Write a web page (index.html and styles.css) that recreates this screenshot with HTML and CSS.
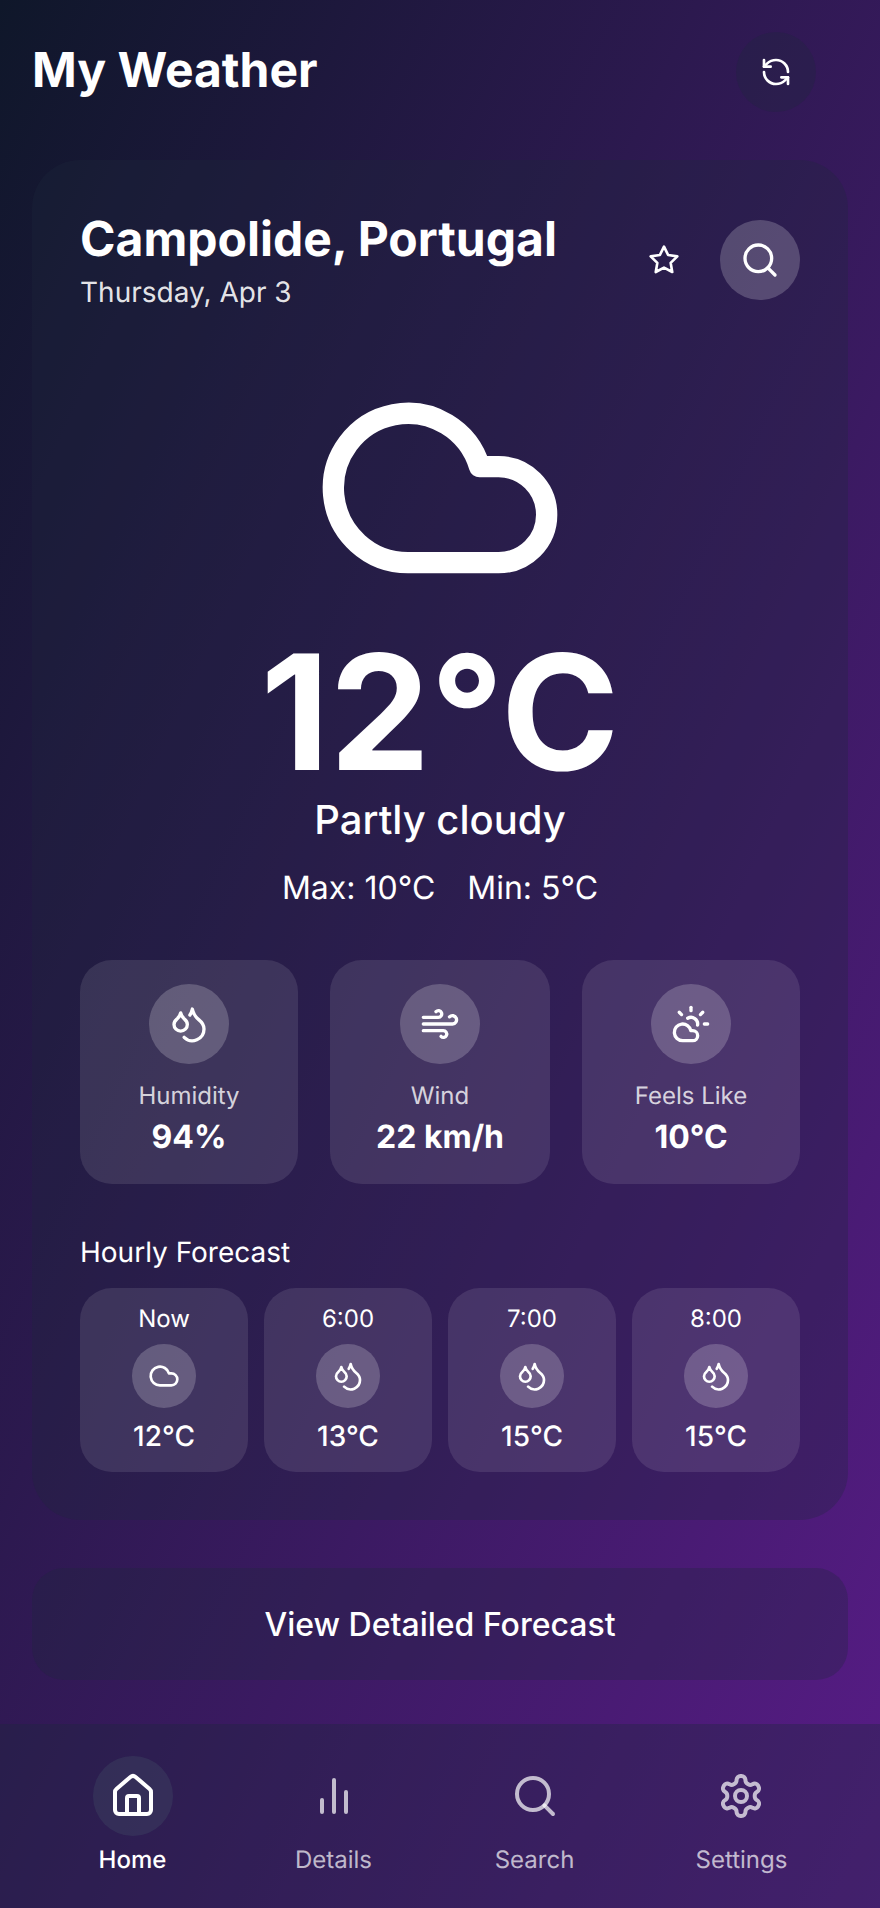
FILE: index.html
```html
<!DOCTYPE html>
<html lang="en">
<head>
    <meta charset="UTF-8">
    <meta name="viewport" content="width=device-width, initial-scale=1.0">
    <title>My Weather</title>
    <link rel="stylesheet" href="styles.css">
</head>
<body>
<svg class="defs" aria-hidden="true">
    <symbol id="i-cloud" viewBox="0 0 24 24"><path d="M17.5 19H9a7 7 0 1 1 6.71-9h1.79a4.5 4.5 0 1 1 0 9Z"/></symbol>
    <symbol id="i-drops" viewBox="0 0 24 24"><path d="M7 16.3c2.2 0 4-1.83 4-4.05 0-1.16-.57-2.26-1.71-3.19S7.29 6.75 7 5.3c-.29 1.45-1.14 2.84-2.29 3.76S3 11.1 3 12.25c0 2.22 1.8 4.05 4 4.05z"/><path d="M12.56 6.6A10.97 10.97 0 0 0 14 3.02c.5 2.5 2 4.9 4 6.5s3 3.5 3 5.5a6.98 6.98 0 0 1-11.91 4.97"/></symbol>
    <symbol id="i-wind" viewBox="0 0 24 24"><path d="M17.7 7.7a2.5 2.5 0 1 1 1.8 4.3H2"/><path d="M9.6 4.6A2 2 0 1 1 11 8H2"/><path d="M12.6 19.4A2 2 0 1 0 14 16H2"/></symbol>
    <symbol id="i-cloud-sun" viewBox="0 0 24 24"><path d="M12 2v2"/><path d="m4.93 4.93 1.41 1.41"/><path d="M20 12h2"/><path d="m19.07 4.93-1.41 1.41"/><path d="M15.947 12.65a4 4 0 0 0-5.925-4.128"/><path d="M13 22H7a5 5 0 1 1 4.9-6H13a3 3 0 0 1 0 6Z"/></symbol>
    <symbol id="i-search" viewBox="0 0 24 24"><circle cx="11" cy="11" r="8"/><path d="m21 21-4.3-4.3"/></symbol>
</svg>

<div class="app">
    <!-- Header -->
    <header class="top-bar">
        <h1>My Weather</h1>
        <button class="round-btn refresh-btn">
            <svg class="icon-32" viewBox="0 0 24 24"><path d="M21 12a9 9 0 0 0-9-9 9.75 9.75 0 0 0-6.74 2.74L3 8"/><path d="M3 3v5h5"/><path d="M3 12a9 9 0 0 0 9 9 9.75 9.75 0 0 0 6.74-2.74L21 16"/><path d="M16 16h5v5"/></svg>
        </button>
    </header>

    <!-- Main card -->
    <main class="weather-card">
        <div class="place-row">
            <div>
                <h2>Campolide, Portugal</h2>
                <p class="date">Thursday, Apr 3</p>
            </div>
            <div class="place-actions">
                <svg class="icon-32 star" viewBox="0 0 24 24"><polygon points="12 2 15.09 8.26 22 9.27 17 14.14 18.18 21.02 12 17.77 5.82 21.02 7 14.14 2 9.27 8.91 8.26 12 2"/></svg>
                <button class="round-btn search-btn"><svg class="icon-40"><use href="#i-search"/></svg></button>
            </div>
        </div>

        <div class="current">
            <svg class="big-cloud"><use href="#i-cloud"/></svg>
            <div class="temp">12°C</div>
            <div class="condition">Partly cloudy</div>
            <div class="range"><span>Max: 10°C</span><span>Min: 5°C</span></div>
        </div>

        <div class="stats">
            <div class="stat">
                <div class="stat-icon"><svg class="icon-40"><use href="#i-drops"/></svg></div>
                <div class="stat-label">Humidity</div>
                <div class="stat-value">94%</div>
            </div>
            <div class="stat">
                <div class="stat-icon"><svg class="icon-40"><use href="#i-wind"/></svg></div>
                <div class="stat-label">Wind</div>
                <div class="stat-value">22 km/h</div>
            </div>
            <div class="stat">
                <div class="stat-icon"><svg class="icon-40"><use href="#i-cloud-sun"/></svg></div>
                <div class="stat-label">Feels Like</div>
                <div class="stat-value">10°C</div>
            </div>
        </div>

        <h3>Hourly Forecast</h3>
        <div class="hours">
            <div class="hour">
                <div class="hour-time">Now</div>
                <div class="hour-icon"><svg class="icon-32"><use href="#i-cloud"/></svg></div>
                <div class="hour-temp">12°C</div>
            </div>
            <div class="hour">
                <div class="hour-time">6:00</div>
                <div class="hour-icon"><svg class="icon-32"><use href="#i-drops"/></svg></div>
                <div class="hour-temp">13°C</div>
            </div>
            <div class="hour">
                <div class="hour-time">7:00</div>
                <div class="hour-icon"><svg class="icon-32"><use href="#i-drops"/></svg></div>
                <div class="hour-temp">15°C</div>
            </div>
            <div class="hour">
                <div class="hour-time">8:00</div>
                <div class="hour-icon"><svg class="icon-32"><use href="#i-drops"/></svg></div>
                <div class="hour-temp">15°C</div>
            </div>
        </div>
    </main>

    <button class="detail-btn">View Detailed Forecast</button>

    <!-- Bottom navigation -->
    <nav class="bottom-nav">
        <div class="nav-item active">
            <div class="nav-icon">
                <svg class="icon-48" viewBox="0 0 24 24"><path d="M15 21v-8a1 1 0 0 0-1-1h-4a1 1 0 0 0-1 1v8"/><path d="M3 10a2 2 0 0 1 .709-1.528l7-5.999a2 2 0 0 1 2.582 0l7 5.999A2 2 0 0 1 21 10v9a2 2 0 0 1-2 2H5a2 2 0 0 1-2-2z"/></svg>
            </div>
            <span>Home</span>
        </div>
        <div class="nav-item">
            <div class="nav-icon">
                <svg class="icon-48" viewBox="0 0 24 24"><path d="M18 20V10"/><path d="M12 20V4"/><path d="M6 20v-6"/></svg>
            </div>
            <span>Details</span>
        </div>
        <div class="nav-item">
            <div class="nav-icon"><svg class="icon-48"><use href="#i-search"/></svg></div>
            <span>Search</span>
        </div>
        <div class="nav-item">
            <div class="nav-icon">
                <svg class="icon-48" viewBox="0 0 24 24"><path d="M12.22 2h-.44a2 2 0 0 0-2 2v.18a2 2 0 0 1-1 1.73l-.43.25a2 2 0 0 1-2 0l-.15-.08a2 2 0 0 0-2.73.73l-.22.38a2 2 0 0 0 .73 2.73l.15.1a2 2 0 0 1 1 1.72v.51a2 2 0 0 1-1 1.74l-.15.09a2 2 0 0 0-.73 2.73l.22.38a2 2 0 0 0 2.73.73l.15-.08a2 2 0 0 1 2 0l.43.25a2 2 0 0 1 1 1.73V20a2 2 0 0 0 2 2h.44a2 2 0 0 0 2-2v-.18a2 2 0 0 1 1-1.73l.43-.25a2 2 0 0 1 2 0l.15.08a2 2 0 0 0 2.73-.73l.22-.39a2 2 0 0 0-.73-2.73l-.15-.08a2 2 0 0 1-1-1.74v-.5a2 2 0 0 1 1-1.74l.15-.09a2 2 0 0 0 .73-2.73l-.22-.38a2 2 0 0 0-2.73-.73l-.15.08a2 2 0 0 1-2 0l-.43-.25a2 2 0 0 1-1-1.73V4a2 2 0 0 0-2-2z"/><circle cx="12" cy="12" r="3"/></svg>
            </div>
            <span>Settings</span>
        </div>
    </nav>
</div>
</body>
</html>
```

FILE: styles.css
```css
* {
    box-sizing: border-box;
}

body {
    font-family: 'Inter', sans-serif;
    margin: 0;
    color: #fff;
    background: #0f172a;
    text-rendering: geometricPrecision;
}

svg {
    fill: none;
    stroke: currentColor;
    stroke-width: 2;
    stroke-linecap: round;
    stroke-linejoin: round;
    display: block;
}

.defs {
    display: none;
}

.icon-32 {
    width: 32px;
    height: 32px;
}

.icon-40 {
    width: 40px;
    height: 40px;
}

.icon-48 {
    width: 48px;
    height: 48px;
}

.app {
    height: 1908px;
    display: flex;
    flex-direction: column;
    overflow: hidden;
    background: linear-gradient(to bottom right, #0f172a 0%, #581c87 100%);
}

/* Header */
.top-bar {
    display: flex;
    align-items: center;
    justify-content: space-between;
    padding: 32px 64px 0 32px;
}

.top-bar h1 {
    margin: -4px 0 0;
    font-size: 48px;
    line-height: 80px;
    font-weight: 700;
}

.round-btn {
    width: 80px;
    height: 80px;
    border: none;
    border-radius: 50%;
    color: #fff;
    display: flex;
    align-items: center;
    justify-content: center;
    padding: 0;
}

.refresh-btn {
    background-color: rgba(30, 41, 59, 0.3);
}

.search-btn {
    background-color: rgba(255, 255, 255, 0.2);
}

/* Main card */
.weather-card {
    margin: 48px 32px 0;
    padding: 48px;
    height: 1360px;
    border-radius: 48px;
    background-color: rgba(30, 41, 59, 0.3);
}

.place-row {
    display: flex;
    justify-content: space-between;
    align-items: center;
    height: 104px;
}

.place-row h2 {
    margin: 0;
    font-size: 48px;
    line-height: 56px;
    font-weight: 700;
}

.date {
    margin: 7px 0 0;
    font-size: 28px;
    line-height: 36px;
    color: rgba(255, 255, 255, 0.9);
}

.place-actions {
    display: flex;
    align-items: center;
    gap: 40px;
}

.current {
    display: flex;
    flex-direction: column;
    align-items: center;
}

.big-cloud {
    width: 256px;
    height: 256px;
    margin-top: 48px;
}

.temp {
    font-size: 160px;
    line-height: 160px;
    font-weight: 700;
    margin-top: 16px;
}

.condition {
    font-size: 40px;
    line-height: 48px;
    font-weight: 500;
    margin-top: 4px;
}

.range {
    display: flex;
    gap: 32px;
    font-size: 32px;
    line-height: 40px;
    margin-top: 24px;
}

/* Stats */
.stats {
    display: grid;
    grid-template-columns: 1fr 220px 1fr;
    gap: 32px;
    margin-top: 52px;
}

.stat {
    height: 224px;
    padding-top: 24px;
    border-radius: 32px;
    background-color: rgba(255, 255, 255, 0.1);
    display: flex;
    flex-direction: column;
    align-items: center;
}

.stat-icon,
.hour-icon {
    border-radius: 50%;
    background-color: rgba(255, 255, 255, 0.2);
    display: flex;
    align-items: center;
    justify-content: center;
}

.stat-icon {
    width: 80px;
    height: 80px;
}

.stat-label {
    margin-top: 16px;
    font-size: 24px;
    line-height: 32px;
    color: rgba(255, 255, 255, 0.8);
}

.stat-value {
    margin-top: 5px;
    font-size: 32px;
    line-height: 40px;
    font-weight: 700;
}

/* Hourly */
h3 {
    margin: 50px 0 0;
    font-size: 28px;
    line-height: 36px;
    font-weight: 400;
}

.hours {
    display: grid;
    grid-template-columns: repeat(4, 1fr);
    gap: 16px;
    margin-top: 18px;
}

.hour {
    height: 184px;
    padding-top: 15px;
    border-radius: 32px;
    background-color: rgba(255, 255, 255, 0.1);
    display: flex;
    flex-direction: column;
    align-items: center;
}

.hour-time {
    font-size: 24px;
    line-height: 32px;
}

.hour-icon {
    width: 64px;
    height: 64px;
    margin-top: 9px;
}

.hour-temp {
    margin-top: 10px;
    font-size: 28px;
    line-height: 36px;
    font-weight: 500;
}

/* Detail button */
.detail-btn {
    margin: 48px 32px 0;
    height: 112px;
    flex-shrink: 0;
    border: none;
    border-radius: 32px;
    color: #fff;
    background-color: rgba(30, 41, 59, 0.3);
    font-family: inherit;
    font-size: 32px;
    font-weight: 500;
}

/* Bottom navigation */
.bottom-nav {
    margin-top: auto;
    height: 184px;
    padding: 32px 32px 0;
    display: flex;
    justify-content: space-around;
    align-items: flex-start;
    background-color: rgba(30, 41, 59, 0.35);
}

.nav-item {
    display: flex;
    flex-direction: column;
    align-items: center;
    font-size: 24px;
    line-height: 32px;
    color: rgba(255, 255, 255, 0.7);
}

.nav-item.active {
    color: #fff;
    font-weight: 500;
}

.nav-icon {
    width: 80px;
    height: 80px;
    border-radius: 50%;
    display: flex;
    align-items: center;
    justify-content: center;
    margin-bottom: 8px;
}

.nav-item.active .nav-icon {
    background-color: rgba(71, 85, 105, 0.3);
}
```
